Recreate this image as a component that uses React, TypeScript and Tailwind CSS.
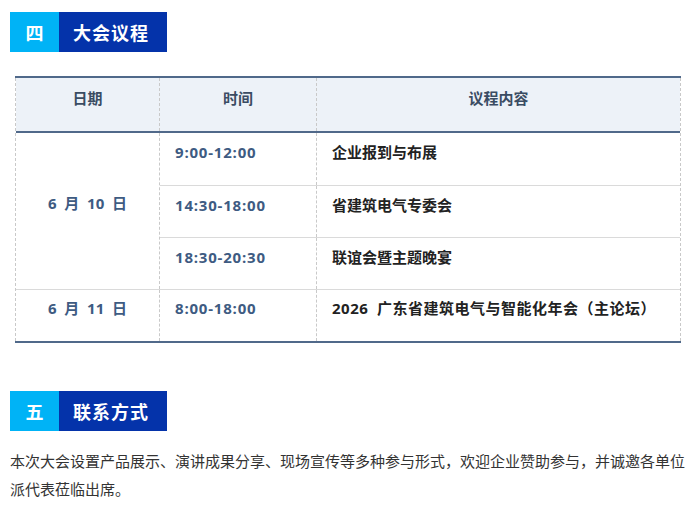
import React from 'react';

const font = { fontFamily: '"Noto Sans CJK SC", "Noto Sans", sans-serif' };
const tableFont = { fontFamily: '"Open Sans", "Noto Sans CJK SC", sans-serif' };

// Section title bar: number block + title block
const SectionTitle: React.FC<{ num: string; title: string }> = ({ num, title }) => (
  <div className="flex h-[40px] w-[157px] text-white font-bold text-[18px]">
    <div className="w-[49px] bg-[#00b3f6] flex items-center justify-center">{num}</div>
    <div className="flex-1 bg-[#0433aa] flex items-center pl-[14px] tracking-[1px]">{title}</div>
  </div>
);

const dayOne = [
  { time: '9:00-12:00', content: '企业报到与布展' },
  { time: '14:30-18:00', content: '省建筑电气专委会' },
  { time: '18:30-20:30', content: '联谊会暨主题晚宴' },
];

const App: React.FC = () => {
  return (
    <div className="w-[695px] h-[507px] bg-white px-[10px] pt-[12px] overflow-hidden" style={font}>
      <SectionTitle num="四" title="大会议程" />

      <div className="mt-[24px] ml-[5px] w-[666px] border-t-2 border-b-2 border-[#50698a]" style={tableFont}>
        <div className="border-x border-dashed border-[#c9c9c9]">
          {/* header */}
          <div className="flex h-[55px] bg-[#edf2f8] border-b-2 border-[#50698a] text-[15px] font-bold text-[#3a4c63] leading-[20px]">
            <div className="w-[143px] text-center pt-[10px]">日期</div>
            <div className="w-[157px] border-l border-dashed border-[#c9c9c9] text-center pt-[10px]">时间</div>
            <div className="flex-1 border-l border-dashed border-[#c9c9c9] text-center pt-[10px]">议程内容</div>
          </div>

          {/* 6月10日 */}
          <div className="flex text-[15px] font-bold leading-[20px]">
            <div className="w-[143px] text-center pt-[60px] text-[#3e5b82] whitespace-pre">6  月  10  日</div>
            <div className="flex-1 border-l border-dashed border-[#c9c9c9]">
              {dayOne.map((row, i) => (
                <div key={row.time} className={`flex h-[52px] ${i > 0 ? 'border-t border-[#dadada]' : ''}`}>
                  <div className="w-[156px] pl-[15px] pt-[9px] text-[#3e5b82] tracking-[0.8px]">{row.time}</div>
                  <div className="flex-1 border-l border-dashed border-[#c9c9c9] pl-[15px] pt-[9px] text-[#222]">{row.content}</div>
                </div>
              ))}
            </div>
          </div>

          {/* 6月11日 */}
          <div className="flex h-[52px] border-t border-[#dadada] text-[15px] font-bold leading-[20px]">
            <div className="w-[143px] text-center pt-[8px] text-[#3e5b82] whitespace-pre">6  月  11  日</div>
            <div className="w-[157px] border-l border-dashed border-[#c9c9c9] pl-[15px] pt-[8px] text-[#3e5b82] tracking-[0.8px]">8:00-18:00</div>
            <div className="flex-1 border-l border-dashed border-[#c9c9c9] pl-[15px] pt-[8px] text-[#222] whitespace-pre tracking-[0.5px]">2026  广东省建筑电气与智能化年会（主论坛）</div>
          </div>
        </div>
      </div>

      <div className="mt-[48px]">
        <SectionTitle num="五" title="联系方式" />
      </div>

      <p className="mt-[16px] -mr-[6px] text-[15px] leading-[28px] text-[#333]">
        本次大会设置产品展示、演讲成果分享、现场宣传等多种参与形式，欢迎企业赞助参与，并诚邀各单位派代表莅临出席。
      </p>
    </div>
  );
};

export default App;
